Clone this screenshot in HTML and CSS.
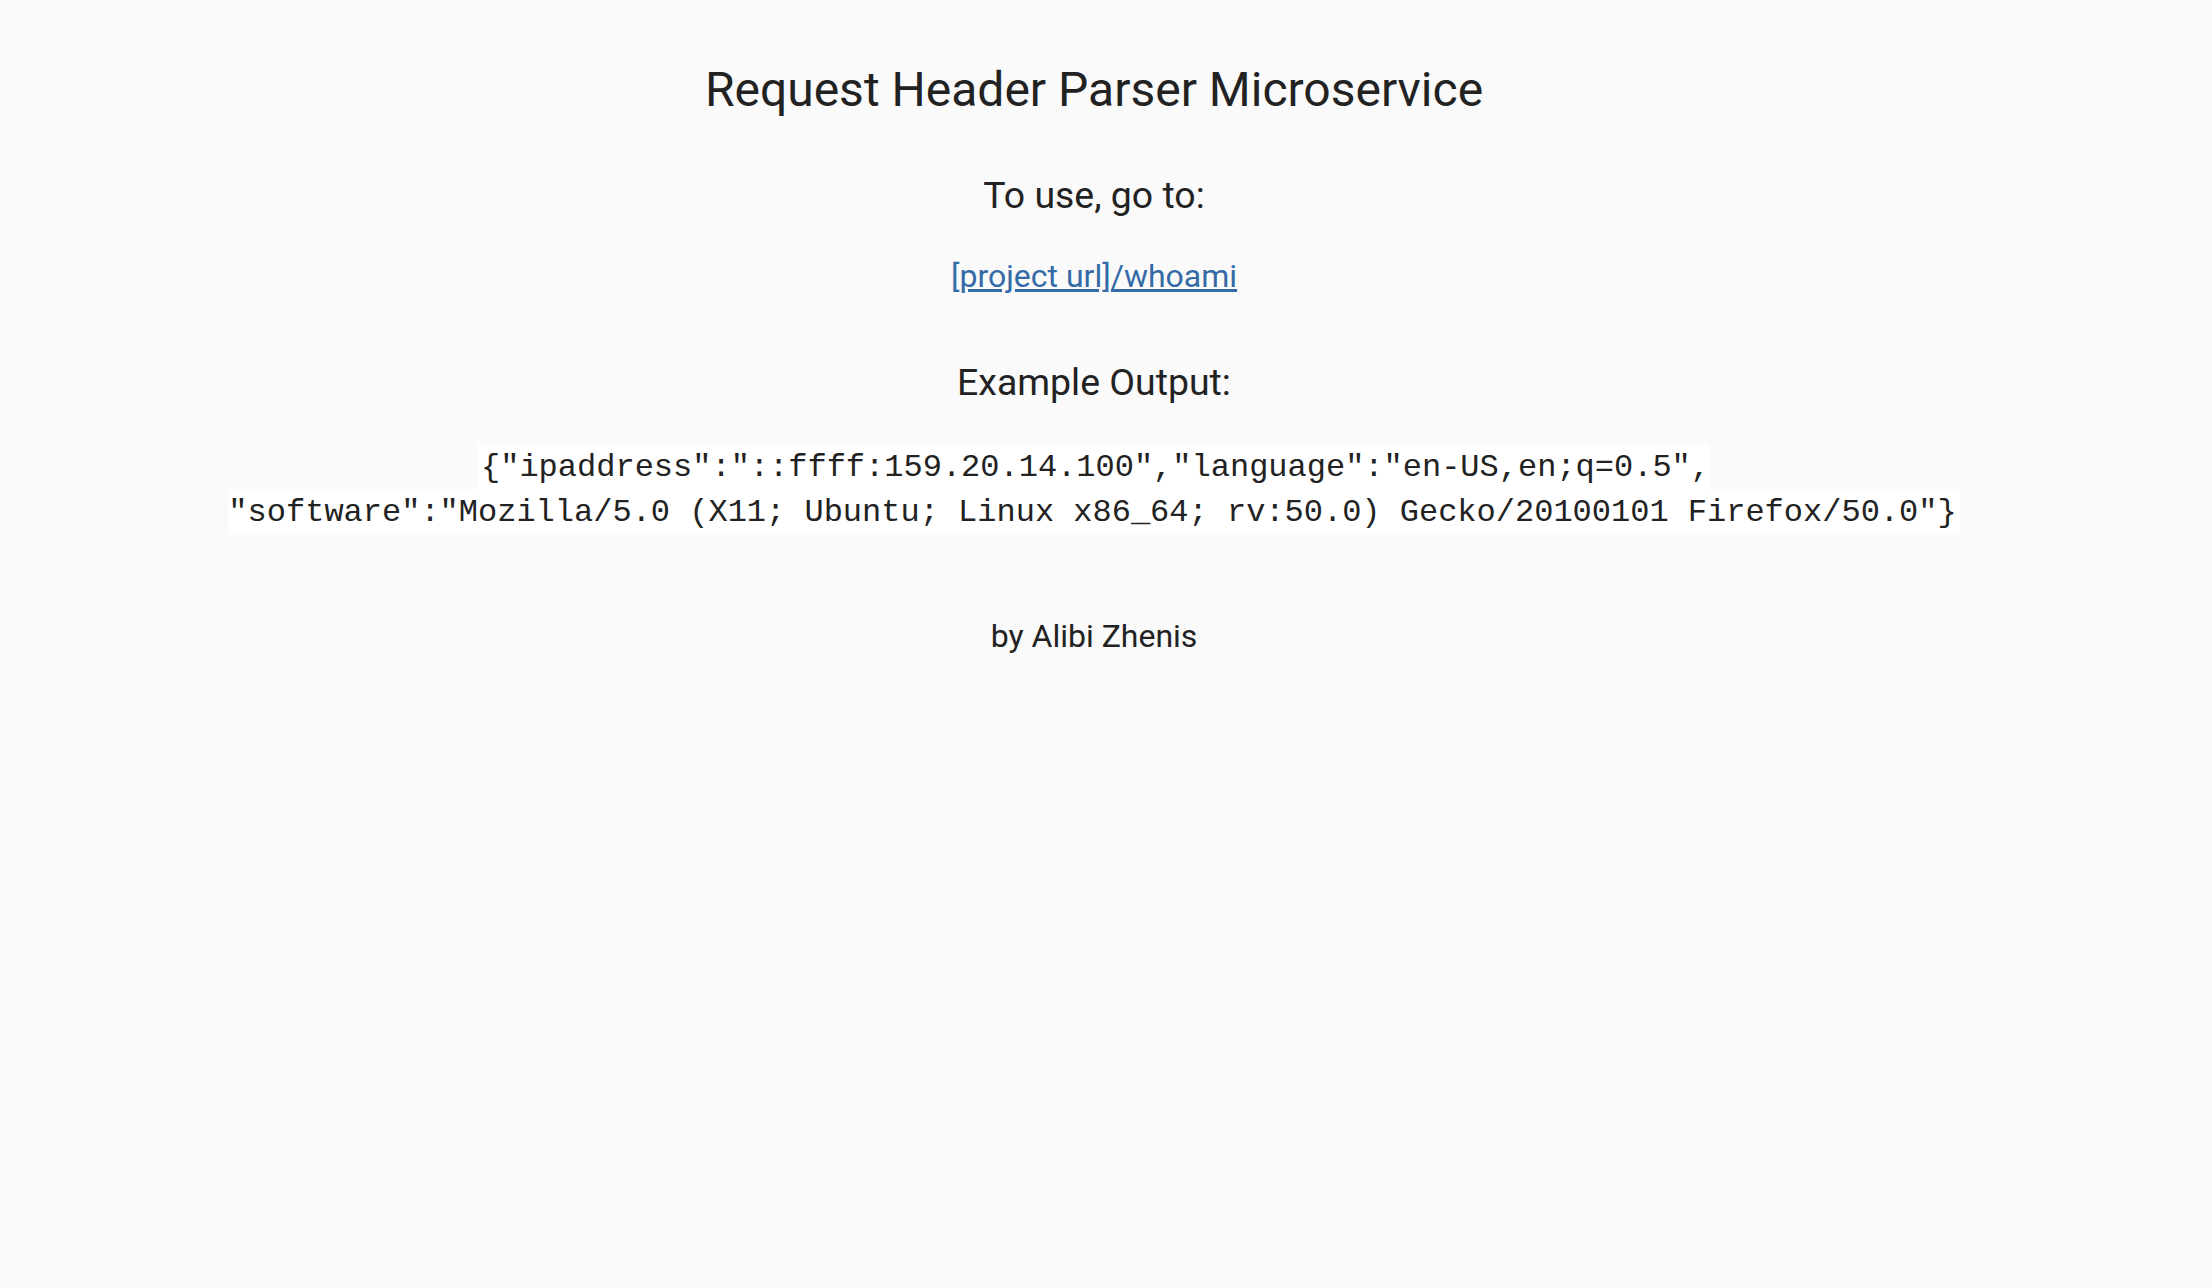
FILE: index.html
```html
<!DOCTYPE html>
<html lang="en">
<head>
<meta charset="utf-8">
<title>Request Header Parser Microservice</title>
<link rel="stylesheet" href="styles.css">
</head>
<body>
<main class="page">
  <h1 class="title">Request Header Parser Microservice</h1>
  <h3 class="subhead subhead-first">To use, go to:</h3>
  <a class="link" href="#">[project url]/whoami</a>
  <h3 class="subhead subhead-second">Example Output:</h3>
  <p class="example"><code class="code">{"ipaddress":"::ffff:159.20.14.100","language":"en-US,en;q=0.5",<br>"software":"Mozilla/5.0 (X11; Ubuntu; Linux x86_64; rv:50.0) Gecko/20100101 Firefox/50.0"}</code></p>
  <p class="author">by Alibi Zhenis</p>
</main>
</body>
</html>
```

FILE: styles.css
```css
html, body {
  margin: 0;
  padding: 0;
  background: #fafafa;
}

body {
  font-family: Roboto, "Liberation Sans", Arial, sans-serif;
  color: #222222;
}

.page {
  display: flex;
  flex-direction: column;
  align-items: center;
  text-align: center;
  padding: 62px 24px 0 0;
}

.title {
  margin: 0;
  font-size: 48px;
  line-height: 56px;
  font-weight: 400;
}

.subhead {
  margin: 0;
  font-size: 37.44px;
  line-height: 44px;
  font-weight: 400;
}

.subhead-first {
  margin-top: 55px;
}

.link {
  margin-top: 40px;
  font-size: 32px;
  line-height: 38px;
  color: #346aa6;
  text-decoration: underline;
}

.subhead-second {
  margin-top: 65px;
}

.example {
  margin: 40px 0 0;
  font-family: "Liberation Mono", "Courier New", monospace;
  font-size: 32px;
  line-height: 45px;
}

.code {
  font-family: "Liberation Mono", "Courier New", monospace;
  background: #ffffff;
  padding: 4.5px 3px;
}

.author {
  margin: 83px 0 0;
  font-size: 32px;
  line-height: 38px;
}
```
